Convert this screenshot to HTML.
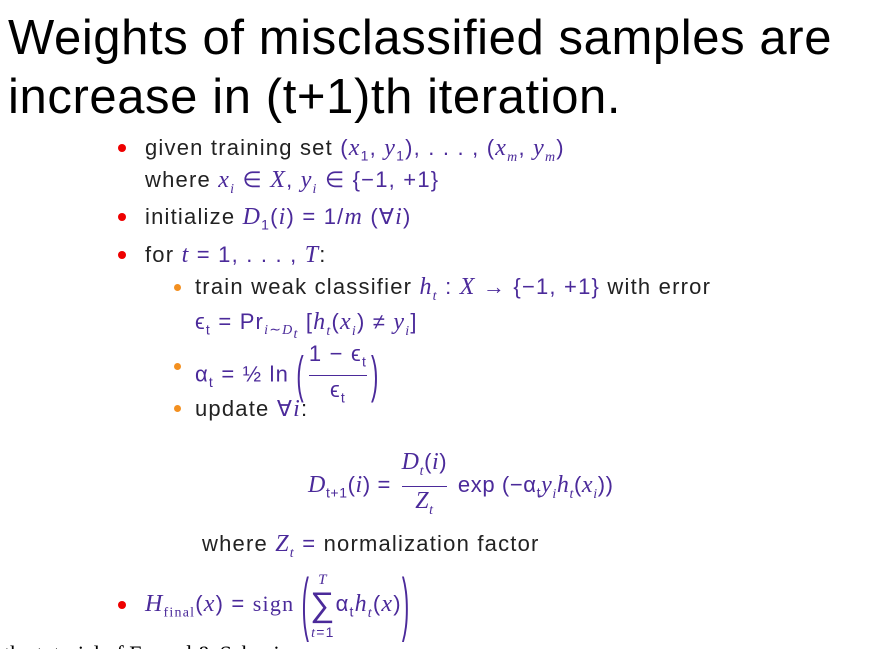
<!DOCTYPE html>
<html><head><meta charset="utf-8"><style>
html,body{margin:0;width:872px;height:649px;overflow:hidden}
body{background:#fff;position:relative;font-family:"Liberation Sans",sans-serif}
.t{position:absolute;left:8px;font-size:49px;color:#000;white-space:nowrap;line-height:1;letter-spacing:0.6px}
.l{position:absolute;font-size:22px;line-height:26px;color:#222;white-space:nowrap;letter-spacing:1.2px}
.m{color:#4b2a9a}
i{font-family:"Liberation Serif",serif;font-size:24px}
.b{position:absolute;width:8px;height:8px;border-radius:50%;background:#e00}
.o{background:#f39020;width:7px;height:7px}
sub{font-size:14px}
.fr{display:inline-block;vertical-align:middle;text-align:center;margin:0 4px}
.fr span{display:block;line-height:28px}
.fr .n{border-bottom:1.5px solid #4b2a9a}
.p{display:inline-block;vertical-align:middle;font-weight:normal}
</style></head><body>
<div class="t" style="top:14px">Weights of misclassified samples are</div>
<div class="t" style="top:73px">increase in (t+1)th iteration.</div>

<div class="b" style="left:118px;top:144px"></div>
<div class="l" style="left:145px;top:135px">given training set <span class="m">(<i>x</i><sub>1</sub>, <i>y</i><sub>1</sub>), . . . , (<i>x<sub>m</sub></i>, <i>y<sub>m</sub></i>)</span></div>
<div class="l" style="left:145px;top:167px">where <span class="m"><i>x<sub>i</sub></i> ∈ <i>X</i>, <i>y<sub>i</sub></i> ∈ {−1, +1}</span></div>
<div class="b" style="left:118px;top:213px"></div>
<div class="l" style="left:145px;top:204px">initialize <span class="m"><i>D</i><sub>1</sub>(<i>i</i>) = 1/<i>m</i> (∀<i>i</i>)</span></div>
<div class="b" style="left:118px;top:251px"></div>
<div class="l" style="left:145px;top:242px">for <span class="m"><i>t</i> = 1, . . . , <i>T</i></span>:</div>
<div class="b o" style="left:174px;top:284px"></div>
<div class="l" style="left:195px;top:274px">train weak classifier <span class="m"><i>h<sub>t</sub></i> : <i>X</i> → {−1, +1}</span> with error</div>
<div class="l m" style="left:195px;top:309px">ϵ<sub>t</sub> = Pr<sub><i style="font-size:14px">i</i>∼<i style="font-size:14px">D<sub>t</sub></i></sub> [<i>h<sub>t</sub></i>(<i>x<sub>i</sub></i>) ≠ <i>y<sub>i</sub></i>]</div>
<div class="b o" style="left:174px;top:363px"></div>
<div class="l m" style="left:195px;top:340px;line-height:56px">α<sub>t</sub> = ½ ln <span class="p" style="transform:scaleY(2.3)">(</span><span class="fr"><span class="n">1 − ϵ<sub>t</sub></span><span>ϵ<sub>t</sub></span></span><span class="p" style="transform:scaleY(2.3)">)</span></div>
<div class="b o" style="left:174px;top:405px"></div>
<div class="l" style="left:195px;top:396px">update <span class="m">∀<i>i</i></span>:</div>

<div class="l m" style="left:308px;top:448px;line-height:56px;letter-spacing:0.6px"><i>D</i><sub>t+1</sub>(<i>i</i>) = <span class="fr"><span class="n"><i>D<sub>t</sub></i>(<i>i</i>)</span><span><i>Z<sub>t</sub></i></span></span> exp (−α<sub>t</sub><i>y<sub>i</sub>h<sub>t</sub></i>(<i>x<sub>i</sub></i>))</div>
<div class="l" style="left:202px;top:531px">where <span class="m"><i>Z<sub>t</sub></i> =</span> normalization factor</div>

<div class="b" style="left:118px;top:601px"></div>
<div class="l m" style="left:145px;top:566px;line-height:76px"><i>H</i><sub style="font-family:'Liberation Serif',serif">final</sub>(<i>x</i>) = <span style="font-family:'Liberation Serif',serif">sign</span> <span class="p" style="transform:scaleY(3.2)">(</span><span style="display:inline-block;vertical-align:middle;text-align:center;line-height:18px"><i style="font-size:15px">T</i><br><span style="font-size:34px;line-height:32px">∑</span><br><i style="font-size:14px">t</i><span style="font-size:14px">=1</span></span>α<sub>t</sub><i>h<sub>t</sub></i>(<i>x</i>)<span class="p" style="transform:scaleY(3.2)">)</span></div>

<div style="position:absolute;left:4px;top:641px;font-family:'Liberation Serif',serif;font-size:22px;color:#000;white-space:nowrap">the tutorial of Freund &amp; Schapire</div>
</body></html>
